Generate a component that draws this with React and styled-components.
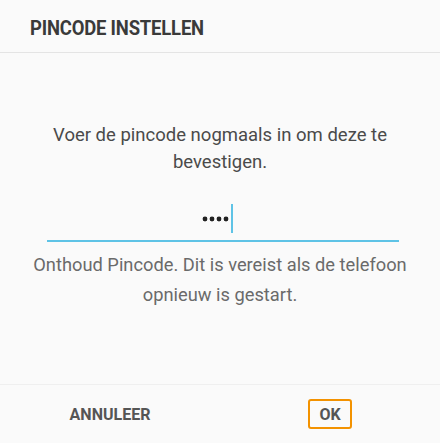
import React from "react"
import styled, { createGlobalStyle } from 'styled-components'

const GlobalStyle = createGlobalStyle`
  html, body {
    margin: 0;
    padding: 0;
    background: #fafafa;
  }
  body {
    font-family: Roboto, "Noto Sans", sans-serif;
  }
`

const App = () => {
  return (
    <>
      <GlobalStyle />
      <Dialog>
        <Header>
          <Title>PINCODE INSTELLEN</Title>
        </Header>
        <Body>
          <Prompt>Voer de pincode nogmaals in om deze te bevestigen.</Prompt>
          <Field>
            <Dots>
              {[0, 1, 2, 3].map(i => <Dot key={i} />)}
            </Dots>
            <Cursor />
          </Field>
          <Hint>Onthoud Pincode. Dit is vereist als de telefoon opnieuw is gestart.</Hint>
        </Body>
        <Footer>
          <ButtonCell>
            <TextButton>ANNULEER</TextButton>
          </ButtonCell>
          <ButtonCell>
            <TextButton focused>OK</TextButton>
          </ButtonCell>
        </Footer>
      </Dialog>
    </>
  )
}

// styles

const Dialog = styled.div`
  width: 440px;
  height: 443px;
  display: flex;
  flex-direction: column;
  background: #fafafa;
  overflow: hidden;
`

const Header = styled.div`
  height: 53px;
  box-sizing: border-box;
  padding: 0 30px;
  display: flex;
  align-items: center;
  border-bottom: 1px solid #e4e4e4;
`

const Title = styled.h1`
  margin: 0;
  font-size: 20.5px;
  font-weight: 700;
  color: #3a3a3a;
  letter-spacing: -0.2px;
  transform: scaleX(0.9);
  transform-origin: left center;
  position: relative;
  top: 2px;
  white-space: nowrap;
`

const Body = styled.div`
  flex: 1;
  display: flex;
  flex-direction: column;
  align-items: center;
  padding: 69px 20px 0;
`

const Prompt = styled.p`
  margin: 0;
  width: 360px;
  text-align: center;
  font-size: 18.5px;
  line-height: 27px;
  color: #4a4a4a;
`

const Field = styled.div`
  width: 342px;
  height: 29px;
  margin: 28px 0 0 6px;
  padding: 0 10px 7px 0;
  box-sizing: content-box;
  display: flex;
  justify-content: center;
  align-items: center;
  border-bottom: 2px solid #5ec3e6;
`

const Dots = styled.div`
  display: flex;
  gap: 3px;
`

const Dot = styled.span`
  width: 4px;
  height: 4px;
  border-radius: 50%;
  background: #222;
  box-shadow: 0 0 0 0.4px #222;
`

const Cursor = styled.span`
  width: 2px;
  height: 29px;
  margin-left: 3px;
  background: #5ec3e6;
`

const Hint = styled.p`
  margin: 8px 0 0;
  width: 390px;
  text-align: center;
  font-size: 18.3px;
  line-height: 30px;
  color: #6a6a6a;
`

const Footer = styled.div`
  height: 58px;
  display: grid;
  grid-template-columns: 1fr 1fr;
  border-top: 1px solid #efefef;
`

const ButtonCell = styled.div`
  display: flex;
  align-items: center;
  justify-content: center;
`

const TextButton = styled.button`
  font-family: Roboto, sans-serif;
  font-size: 16px;
  font-weight: 700;
  color: #555;
  background: none;
  padding: 0 8px;
  height: 30px;
  min-width: 44px;
  border: 2px solid ${p => p.focused ? '#f39200' : 'transparent'};
  border-radius: 3px;
  cursor: pointer;
`

export default App
